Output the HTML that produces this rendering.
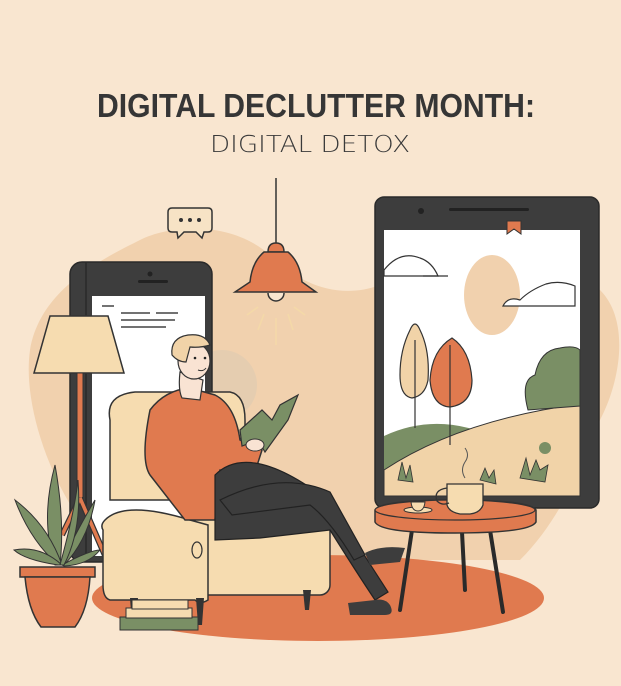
<!DOCTYPE html>
<html><head><meta charset="utf-8"><style>
html,body{margin:0;padding:0;background:#f9e6d0;}
svg{display:block}
</style></head><body>
<svg width="621" height="686" viewBox="0 0 621 686" xmlns="http://www.w3.org/2000/svg">
<rect width="621" height="686" fill="#f9e6d0"/>
<path d="M30 350 C40 290 100 260 140 240 C170 225 230 220 270 255 C300 285 340 300 380 285 C430 270 520 250 600 290 C630 320 621 380 600 420 C580 470 560 520 520 560 L120 560 C70 530 20 420 30 350Z" fill="#f1d1ae"/>
<circle cx="222" cy="385" r="35" fill="#e5cdb0"/>
<text x="316" y="117" text-anchor="middle" font-family="Liberation Sans, sans-serif" font-weight="bold" font-size="33" fill="#363636" textLength="438" lengthAdjust="spacingAndGlyphs">DIGITAL DECLUTTER MONTH:</text>
<text x="310" y="152" text-anchor="middle" font-family="DejaVu Sans, sans-serif" font-weight="200" font-size="23" fill="#3a3a3a" textLength="200" lengthAdjust="spacingAndGlyphs">DIGITAL DETOX</text>
<path d="M172 208 H208 Q212 208 212 212 V228 Q212 232 208 232 H204 L202 238 L196 232 H184 L178 238 L177 232 H172 Q168 232 168 228 V212 Q168 208 172 208Z" fill="#f7e3c5" stroke="#333" stroke-width="1.5"/>
<circle cx="181" cy="220" r="2" fill="#333"/><circle cx="190" cy="220" r="2" fill="#333"/><circle cx="199" cy="220" r="2" fill="#333"/>
<line x1="276" y1="178" x2="276" y2="244" stroke="#333" stroke-width="1.5"/>
<path d="M268 252 Q268 243 276 243 Q284 243 284 252Z" fill="#e07a4f" stroke="#333" stroke-width="1.5"/>
<path d="M264 252 H288 Q300 262 302 282 L316 292 H235 L250 282 Q252 262 264 252Z" fill="#e07a4f" stroke="#333" stroke-width="1.5"/>
<path d="M268 293 A8 8 0 0 0 284 293" fill="#f9e6d0" stroke="#333" stroke-width="1.5"/>
<g stroke="#f4d9a8" stroke-width="1.5"><line x1="276" y1="318" x2="276" y2="345"/><line x1="264" y1="314" x2="258" y2="330"/><line x1="288" y1="314" x2="293" y2="330"/><line x1="258" y1="307" x2="247" y2="315"/><line x1="294" y1="307" x2="305" y2="315"/></g>
<rect x="70" y="262" width="142" height="300" rx="12" fill="#3d3d3d" stroke="#2a2a2a" stroke-width="1.5"/>
<path d="M86 262 V562" stroke="#2a2a2a" stroke-width="1.5"/>
<rect x="92" y="296" width="113" height="260" fill="#fff"/>
<circle cx="150" cy="274" r="2.5" fill="#222"/><rect x="138" y="280" width="30" height="3" rx="1.5" fill="#222"/>
<g stroke="#444" stroke-width="1.5"><line x1="102" y1="306" x2="114" y2="306"/><line x1="121" y1="313" x2="150" y2="313"/><line x1="156" y1="313" x2="178" y2="313"/><line x1="121" y1="320" x2="175" y2="320"/><line x1="121" y1="327" x2="166" y2="327"/></g>
<rect x="375" y="197" width="224" height="311" rx="9" fill="#3d3d3d" stroke="#2a2a2a" stroke-width="1.5"/>
<rect x="384" y="230" width="196" height="266" fill="#fff"/>
<circle cx="421" cy="211" r="3" fill="#222"/><rect x="449" y="208" width="80" height="3" rx="1.5" fill="#222"/>
<path d="M507 221 V234 L514 229 L521 234 V221Z" fill="#e07a4f" stroke="#333" stroke-width="1"/>
<ellipse cx="492" cy="295" rx="28" ry="40" fill="#f1d1ae"/>
<path d="M384 270 Q400 250 420 258 Q432 262 438 276 H384Z" fill="#fff" stroke="#333" stroke-width="1.2"/>
<line x1="423" y1="276" x2="448" y2="276" stroke="#333" stroke-width="1.2"/>
<path d="M503 306 Q508 296 520 300 Q530 290 546 284 Q560 280 575 286 V306Z" fill="#fff" stroke="#333" stroke-width="1.2"/>
<path d="M384 436 Q440 410 500 440 L580 420 V496 H384Z" fill="#7a8f65"/>
<path d="M384 470 Q460 420 580 404 V496 H384Z" fill="#f1d3a8" stroke="#333" stroke-width="1"/>
<path d="M528 410 Q520 380 535 375 Q540 350 560 348 Q575 345 580 350 V406Z" fill="#7a8f65" stroke="#333" stroke-width="1"/>
<path d="M410 330 Q400 350 400 375 Q400 396 412 398 Q425 396 428 380 Q430 350 420 330 Q415 318 410 330Z" fill="#f1d3a8" stroke="#333" stroke-width="1.2"/>
<line x1="415" y1="340" x2="415" y2="428" stroke="#333" stroke-width="1.2"/>
<path d="M452 338 Q432 350 430 380 Q432 406 450 407 Q472 404 472 380 Q470 350 452 338Z" fill="#e07a4f" stroke="#333" stroke-width="1.2"/>
<line x1="450" y1="345" x2="450" y2="445" stroke="#333" stroke-width="1.2"/>
<circle cx="545" cy="448" r="6" fill="#7a8f65"/>
<path d="M398 480 L402 462 L406 478 L410 465 L413 482Z M520 478 L526 458 L530 475 L536 460 L540 470 L548 465 L545 482Z M480 480 L485 468 L489 478 L494 470 L496 484Z" fill="#7a8f65" stroke="#333" stroke-width="0.8"/>
<ellipse cx="318" cy="598" rx="226" ry="43" fill="#e07a4f"/>
<path d="M50 316 H108 L124 373 H34Z" fill="#f6dcb0" stroke="#333" stroke-width="1.5"/>
<rect x="77" y="373" width="6" height="125" fill="#e07a4f" stroke="#333" stroke-width="1"/>
<path d="M80 498 L120 590 M80 498 L62 535" stroke="#333" stroke-width="6"/>
<path d="M80 498 L120 590 M80 498 L62 535" stroke="#e07a4f" stroke-width="3.5"/>
<g fill="#7a8f65" stroke="#333" stroke-width="1"><path d="M55 565 Q40 520 55 465 Q65 520 60 565Z"/><path d="M58 565 Q30 540 15 500 Q48 525 62 565Z"/><path d="M60 565 Q80 525 95 500 Q88 540 64 565Z"/><path d="M58 565 Q25 560 14 550 Q40 545 62 565Z"/><path d="M62 565 Q90 550 100 550 Q88 565 64 566Z"/><path d="M60 565 Q75 510 78 480 Q82 530 64 565Z"/></g>
<rect x="20" y="567" width="75" height="10" fill="#e07a4f" stroke="#333" stroke-width="1.5"/>
<path d="M25 577 H90 Q88 610 75 627 H41 Q28 610 25 577Z" fill="#e07a4f" stroke="#333" stroke-width="1.5"/>
<path d="M110 420 Q105 395 135 392 H230 Q245 395 245 420 V500 H110Z" fill="#f6dcb0" stroke="#333" stroke-width="1.5"/>
<rect x="195" y="500" width="135" height="95" rx="10" fill="#f6dcb0" stroke="#333" stroke-width="1.5"/>
<path d="M103 530 Q100 525 105 520 Q125 500 190 520 L208 525 V600 Q200 605 195 600 H110 Q103 598 103 585Z" fill="#f6dcb0" stroke="#333" stroke-width="1.5"/>
<ellipse cx="197" cy="550" rx="5" ry="8" fill="none" stroke="#333" stroke-width="1.2"/>
<path d="M130 598 H138 L136 625 H132Z M196 598 H204 L202 625 H198Z M303 590 H311 L309 610 H305Z" fill="#333"/>
<path d="M150 410 Q165 390 190 388 L215 395 Q235 405 240 440 L262 450 L255 472 L220 470 L215 520 L185 520 L150 475 Q140 460 150 410Z" fill="#e07a4f" stroke="#333" stroke-width="1.5"/>
<path d="M215 475 Q250 440 330 502 L388 592 L375 600 Q355 570 330 530 L260 538 L215 540 Z" fill="#3d3d3d" stroke="#222" stroke-width="1.2"/>
<path d="M220 500 Q280 470 330 492 L365 555 L354 560 Q330 520 310 505 L232 515Z" fill="#3d3d3d" stroke="#222" stroke-width="1.2"/>
<path d="M365 553 Q380 545 405 548 L400 562 L370 565Z M375 600 Q385 598 390 605 Q395 615 385 615 H350 L348 603Z" fill="#3d3d3d"/>
<path d="M180 372 Q178 390 182 398 L200 400 L203 380Z" fill="#f9e3d3" stroke="#333" stroke-width="1.2"/>
<ellipse cx="194" cy="361" rx="16" ry="18" fill="#f9e3d3" stroke="#333" stroke-width="1.2"/>
<path d="M172 355 Q170 338 188 335 Q205 333 210 345 Q200 348 190 347 L186 362 Q178 362 172 355Z" fill="#f1d3a8" stroke="#333" stroke-width="1.2"/>
<circle cx="195" cy="358" r="1.3" fill="#222"/><circle cx="205" cy="358" r="1.3" fill="#222"/>
<path d="M198 370 Q203 372 206 368" stroke="#333" fill="none" stroke-width="1"/>
<path d="M240 430 L262 410 L272 420 L280 405 L298 395 L288 420 L265 452 L258 440 L242 446Z" fill="#7a8f65" stroke="#333" stroke-width="1.2"/>
<ellipse cx="255" cy="445" rx="9" ry="6" fill="#f9e3d3" stroke="#333" stroke-width="1"/>
<rect x="120" y="617" width="78" height="13" fill="#7a8f65" stroke="#333" stroke-width="1"/>
<rect x="126" y="608" width="66" height="10" fill="#f6dcb0" stroke="#333" stroke-width="1"/>
<rect x="132" y="600" width="56" height="9" fill="#f6dcb0" stroke="#333" stroke-width="1"/>
<g stroke="#2a2a2a" stroke-width="4" stroke-linecap="round"><line x1="412" y1="530" x2="400" y2="610"/><line x1="490" y1="530" x2="503" y2="612"/><line x1="462" y1="532" x2="465" y2="590"/></g>
<path d="M375 510 Q380 500 455 500 Q530 500 536 510 V522 Q530 533 455 533 Q380 533 375 522Z" fill="#e07a4f" stroke="#333" stroke-width="1.5"/>
<ellipse cx="455" cy="510" rx="80" ry="10" fill="#e07a4f" stroke="#333" stroke-width="1.2"/>
<ellipse cx="418" cy="510" rx="14" ry="3" fill="#f6dcb0" stroke="#333" stroke-width="1"/>
<path d="M411 502 H425 Q424 511 418 511 Q412 511 411 502Z" fill="#f6dcb0" stroke="#333" stroke-width="1"/>
<path d="M447 484 H483 V505 Q480 513 470 514 H460 Q449 512 447 505Z" fill="#f6dcb0" stroke="#333" stroke-width="1.3"/>
<path d="M447 488 Q433 490 437 501 Q442 506 449 503" fill="none" stroke="#333" stroke-width="1.3"/>
<path d="M465 448 Q470 455 465 462 Q460 470 465 478" fill="none" stroke="#555" stroke-width="1"/>
</svg>
</body></html>
